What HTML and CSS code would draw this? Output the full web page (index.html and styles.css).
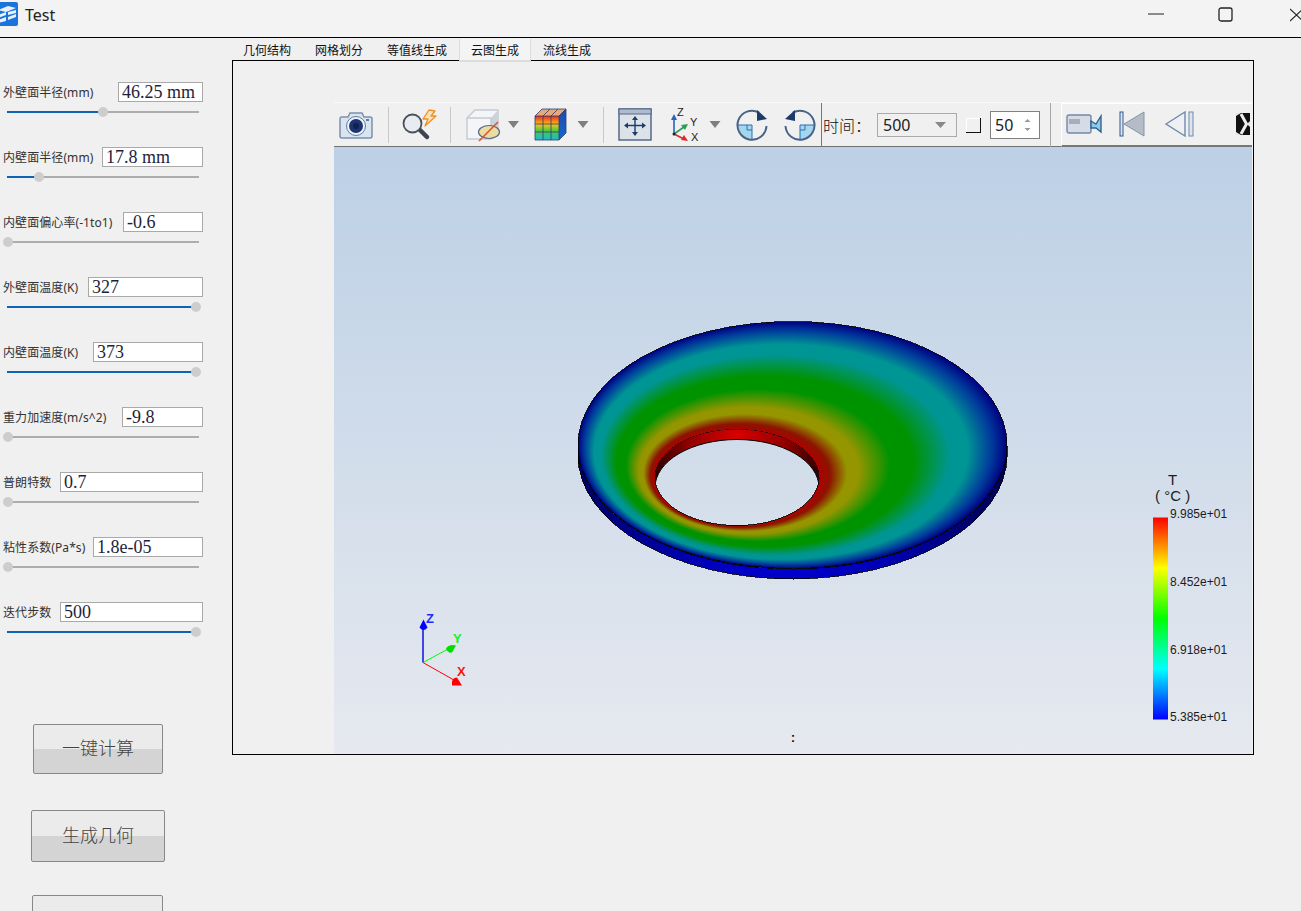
FILE: index.html
```html
<!DOCTYPE html>
<html lang="zh">
<head>
<meta charset="utf-8">
<title>Test</title>
<link rel="stylesheet" href="styles.css">
</head>
<body>
<header class="titlebar">
  <svg class="app-icon" viewBox="0 0 18 24">
    <rect x="-6" width="24" height="24" rx="2" fill="#1b74dc"/>
    <path d="M-2 8 8 4 16 6 6 10ZM-2 13 6 10 6 13-2 16ZM8 10 16 8 16 11 8 13ZM-2 18 6 15 6 19-2 21ZM8 15 16 12 16 15 8 18Z" fill="#e9f2fc"/>
  </svg>
  <span class="app-name">Test</span>
  <div class="win-controls">
    <svg class="win-min" viewBox="0 0 16 2"><path d="M0 1H16" stroke="#222"/></svg>
    <svg class="win-max" viewBox="0 0 15 15"><rect x="1" y="1" width="13" height="13" rx="2" fill="none" stroke="#222" stroke-width="1.3"/></svg>
    <svg class="win-close" viewBox="0 0 11 14"><path d="M0 1 13 13M13 1 0 13" stroke="#222" stroke-width="1.1" fill="none"/></svg>
  </div>
</header>

<div class="workspace">
  <aside class="sidebar">
    <div class="param"><div class="param-line"><label class="param-label">外壁面半径(mm)</label><input class="param-input w85" value="46.25 mm"></div><div class="slider"><div class="fill" style="width:96px"></div></div></div>
    <div class="param"><div class="param-line"><label class="param-label">内壁面半径(mm)</label><input class="param-input w101" value="17.8 mm"></div><div class="slider"><div class="fill" style="width:32px"></div></div></div>
    <div class="param"><div class="param-line"><label class="param-label">内壁面偏心率(-1to1)</label><input class="param-input w80" value="-0.6"></div><div class="slider"><div class="fill" style="width:1px"></div></div></div>
    <div class="param"><div class="param-line"><label class="param-label">外壁面温度(K)</label><input class="param-input w115" value="327"></div><div class="slider"><div class="fill" style="width:189px"></div></div></div>
    <div class="param"><div class="param-line"><label class="param-label">内壁面温度(K)</label><input class="param-input w110" value="373"></div><div class="slider"><div class="fill" style="width:189px"></div></div></div>
    <div class="param"><div class="param-line"><label class="param-label">重力加速度(m/s^2)</label><input class="param-input w81" value="-9.8"></div><div class="slider"><div class="fill" style="width:1px"></div></div></div>
    <div class="param"><div class="param-line"><label class="param-label">普朗特数</label><input class="param-input w143" value="0.7"></div><div class="slider"><div class="fill" style="width:1px"></div></div></div>
    <div class="param"><div class="param-line"><label class="param-label">粘性系数(Pa*s)</label><input class="param-input w110" value="1.8e-05"></div><div class="slider"><div class="fill" style="width:1px"></div></div></div>
    <div class="param"><div class="param-line"><label class="param-label">迭代步数</label><input class="param-input w143" value="500"></div><div class="slider"><div class="fill" style="width:189px"></div></div></div>

    <button class="action action-a">一键计算</button>
    <button class="action action-b">生成几何</button>
    <button class="action action-c"></button>
  </aside>

  <main class="content">
    <nav class="tabs">
      <span class="tab">几何结构</span>
      <span class="tab">网格划分</span>
      <span class="tab">等值线生成</span>
      <span class="tab tab-active">云图生成</span>
      <span class="tab">流线生成</span>
    </nav>
    <section class="frame">
      <div class="view">
        <div class="toolbar">
          <svg class="ic i-cam" viewBox="0 0 34 28">
            <path d="M2 6H9L11 2H23L25 6H31Q33 6 33 8V25Q33 27 31 27H3Q1 27 1 25V8Q1 6 2 6Z" fill="#d9e4f1" stroke="#7d90ab" stroke-width="1.5"/>
            <circle cx="17" cy="15" r="9.5" fill="#eef3f9" stroke="#5f7ba3"/>
            <circle cx="17" cy="15" r="7" fill="#1c3470"/>
            <circle cx="17" cy="15" r="3" fill="#0f2250"/>
            <rect x="27" y="8" width="3" height="2" fill="#5f7ba3"/>
          </svg>
          <span class="sep s-a"></span>
          <svg class="ic i-search" viewBox="0 0 35 32">
            <path d="M18 21 25 28" stroke="#3e4350" stroke-width="4.5" stroke-linecap="round"/>
            <circle cx="10.500" cy="14.500" r="9" fill="#e8ebef" stroke="#4a4f59" stroke-width="1.8"/>
            <path d="M27 1 21 10H26L23 17 34 7H29L33 2Z" fill="#fbe2bc" stroke="#ee8f20" stroke-width="1.3" stroke-linejoin="round"/>
          </svg>
          <span class="sep s-b"></span>
          <svg class="ic i-box" viewBox="0 0 36 34">
            <path d="M2 10 10 2H33V24L26 31H2Z" fill="#f4f5f7" stroke="#c3cad5" stroke-width="1.4"/>
            <path d="M26 10 33 2V24L26 31Z" fill="#ccd2db"/>
            <path d="M2 10H26V31" fill="none" stroke="#c3cad5" stroke-width="1.4"/>
            <ellipse cx="24" cy="24" rx="10.5" ry="6.5" fill="#ecdca4" stroke="#55688a" stroke-width="1.2"/>
            <path d="M14 33 33 14" stroke="#d8562c" stroke-width="1.6"/>
          </svg>
          <svg class="ic i-tri i-tri-a" viewBox="0 0 11 7"><path d="M0 0H11L5.5 7Z" fill="#7f7f7f"/></svg>
          <svg class="ic i-cube" viewBox="0 0 33 33">
            <defs>
              <linearGradient id="cubeFace" x1="0" y1="0" x2="0" y2="1">
                <stop offset="0" stop-color="#ea2c20"/><stop offset=".35" stop-color="#f6c21c"/><stop offset=".6" stop-color="#52c93c"/><stop offset="1" stop-color="#18b8d8"/>
              </linearGradient>
              <linearGradient id="cubeSide" x1="0" y1="0" x2="0" y2="1">
                <stop offset="0" stop-color="#2448a8"/><stop offset="1" stop-color="#1468d0"/>
              </linearGradient>
            </defs>
            <path d="M1 8H25V32H1Z" fill="url(#cubeFace)"/>
            <path d="M1 8 8 1H32L25 8Z" fill="#e8a878"/>
            <path d="M25 8 32 1V25L25 32Z" fill="url(#cubeSide)"/>
            <path d="M1 8H25V32H1ZM9 8V32M17 8V32M1 16H25M1 24H25M1 8 8 1H32L25 8M9 8 16 1M17 8 24 1M25 8 32 1V25L25 32" fill="none" stroke="#2c3e6a" stroke-width=".8"/>
          </svg>
          <svg class="ic i-tri i-tri-b" viewBox="0 0 11 7"><path d="M0 0H11L5.5 7Z" fill="#7f7f7f"/></svg>
          <span class="sep s-c"></span>
          <svg class="ic i-fit" viewBox="0 0 34 33">
            <rect x="1" y="1" width="32" height="31" fill="#dde1e8" stroke="#54688c" stroke-width="1.5"/>
            <rect x="1" y="1" width="32" height="5" fill="#b0bccd" stroke="#54688c"/>
            <path d="M17 9V27M8 17.500H26" stroke="#1c3e6c" stroke-width="1.4"/>
            <path d="M17 8 14 12H20ZM17 28 14 24H20ZM6 17.500 10 14.500V20.500ZM28 17.500 24 14.500V20.500Z" fill="#1c3e6c"/>
          </svg>
          <svg class="ic i-axes" viewBox="0 -3 30 36">
            <path d="M4 24V8" stroke="#2a62c0" stroke-width="1.6"/>
            <path d="M4 4 1 10H7Z" fill="#2a62c0"/>
            <path d="M4 24 14 17" stroke="#2f9a55" stroke-width="1.6"/>
            <path d="M18 14 11 15 15 20Z" fill="#2f9a55"/>
            <path d="M4 24 14 29" stroke="#e02828" stroke-width="1.6"/>
            <path d="M18 31 11 30 14 25Z" fill="#e02828"/>
            <circle cx="4" cy="24" r="1.500" fill="#222"/>
            <text class="axes-t" x="7" y="6">Z</text>
            <text class="axes-t" x="20" y="16">Y</text>
            <text class="axes-t" x="21" y="31">X</text>
          </svg>
          <svg class="ic i-tri i-tri-c" viewBox="0 0 11 7"><path d="M0 0H11L5.500 7Z" fill="#7f7f7f"/></svg>
          <svg class="ic i-rot" viewBox="0 0 32 32">
            <path d="M2 16H16V30A14 14 0 0 1 2 16Z" fill="#a5d6ef"/>
            <path d="M2 16H16V30M11 16V21H16" fill="none" stroke="#2f6fae"/>
            <path d="M30.500 17A14.500 14.500 0 1 1 23 3.500" fill="none" stroke="#4a6286" stroke-width="2"/>
            <path d="M31 10 21 1V12Z" fill="#1d3a6c"/>
          </svg>
          <svg class="ic i-rot2" viewBox="0 0 32 32">
            <path d="M30 16H16V30A14 14 0 0 0 30 16Z" fill="#a5d6ef"/>
            <path d="M30 16H16V30M21 16V21H16" fill="none" stroke="#2f6fae"/>
            <path d="M1.500 17A14.500 14.500 0 1 0 9 3.500" fill="none" stroke="#4a6286" stroke-width="2"/>
            <path d="M1 10 11 1V12Z" fill="#1d3a6c"/>
          </svg>
          <span class="sep-dark"></span>
          <span class="time-label">时间：</span>
          <div class="combo"><span>500</span><svg class="combo-arrow" viewBox="0 0 11 6"><path d="M0 0H11L5.500 6Z" fill="#888"/></svg></div>
          <span class="check"></span>
          <div class="spin"><span>50</span><svg class="spin-arrows" viewBox="0 0 7 14"><path d="M3.500 1 6.500 4H.5ZM3.500 13 .5 10H6.500Z" fill="#999"/></svg></div>
          <span class="sep s-d"></span>
          <div class="player">
            <svg class="ic i-video" viewBox="0 0 36 20">
              <rect x="1" y="1" width="24" height="18" rx="2" fill="#d6dce5" stroke="#7188a8" stroke-width="1.4"/>
              <rect x="3" y="5" width="11" height="5" fill="#a5aebb"/>
              <path d="M25 7 30 10 35 2V18L30 14 25 14Z" fill="#8fcbe8" stroke="#33618f" stroke-width="1.4"/>
            </svg>
            <svg class="ic i-first" viewBox="0 0 26 26">
              <rect x="1" y="1" width="3" height="24" fill="#dfe4ea" stroke="#2e5990"/>
              <path d="M5 13 25 1V25Z" fill="#b4bcc7" stroke="#8594a8"/>
            </svg>
            <svg class="ic i-prev" viewBox="0 0 29 26">
              <path d="M1 13 20 1V25Z" fill="#eef0f3" stroke="#6e8bac" stroke-width="1.4"/>
              <rect x="24" y="1" width="4" height="24" fill="#dfe4ea" stroke="#6e8bac"/>
            </svg>
            <svg class="ic i-more" viewBox="0 0 14 22">
              <rect width="14" height="22" fill="#111"/>
              <path d="M0 0H5L0 3ZM0 22H5L0 19ZM14 8 11 11 14 14Z" fill="#e6e6e6"/>
              <path d="M5 1 10.500 11 5 21" fill="none" stroke="#eee" stroke-width="3"/>
            </svg>
          </div>
        </div>

        <svg class="scene" viewBox="334 147 918 606">
          <defs>
            <radialGradient id="field" gradientUnits="userSpaceOnUse" gradientTransform="matrix(1 0 0 .5757 0 0)" cx="792.5" cy="772.1" r="214.5" fx="737" fy="828.6" fr="82">
              <stop offset="0" stop-color="#b00000"/>
              <stop offset=".06" stop-color="#8c1400"/>
              <stop offset=".15" stop-color="#959500"/>
              <stop offset=".21" stop-color="#959500"/>
              <stop offset=".38" stop-color="#009300"/>
              <stop offset=".5" stop-color="#009300"/>
              <stop offset=".7" stop-color="#009595"/>
              <stop offset=".79" stop-color="#009595"/>
              <stop offset=".92" stop-color="#003a9c"/>
              <stop offset="1" stop-color="#000080"/>
            </radialGradient>
            <linearGradient id="rim" gradientUnits="userSpaceOnUse" x1="578" y1="0" x2="1007" y2="0">
              <stop offset="0" stop-color="#00005c"/>
              <stop offset=".1" stop-color="#000088"/>
              <stop offset=".32" stop-color="#0000c0"/>
              <stop offset=".5" stop-color="#0000cc"/>
              <stop offset=".72" stop-color="#0000b4"/>
              <stop offset=".92" stop-color="#00006e"/>
              <stop offset="1" stop-color="#00004c"/>
            </linearGradient>
            <linearGradient id="wall" gradientUnits="userSpaceOnUse" x1="655" y1="0" x2="819" y2="0">
              <stop offset="0" stop-color="#2c0000"/>
              <stop offset=".2" stop-color="#900000"/>
              <stop offset=".5" stop-color="#d80000"/>
              <stop offset=".8" stop-color="#900000"/>
              <stop offset="1" stop-color="#2c0000"/>
            </linearGradient>
            <linearGradient id="scale" x1="0" y1="1" x2="0" y2="0">
              <stop offset="0" stop-color="#0000ff"/>
              <stop offset=".25" stop-color="#00ffff"/>
              <stop offset=".5" stop-color="#00ff00"/>
              <stop offset=".75" stop-color="#ffff00"/>
              <stop offset="1" stop-color="#ff0000"/>
            </linearGradient>
            <mask id="crescent" maskUnits="userSpaceOnUse" x="600" y="400" width="260" height="160">
              <ellipse cx="737" cy="477" rx="82" ry="48" fill="#fff"/>
              <ellipse cx="737" cy="487" rx="82" ry="48" fill="#000"/>
            </mask>
            <clipPath id="holeClip">
              <ellipse cx="737" cy="477" rx="82" ry="48"/>
            </clipPath>
          </defs>

          <g shape-rendering="crispEdges">
            <path d="M578 445A214.500 123.500 0 0 0 1007 445V455A214.500 123.500 0 0 1 578 455Z" fill="url(#rim)" stroke="#000" stroke-width=".8"/>
            <path fill-rule="evenodd" d="M578 444.500A214.500 123.500 0 0 1 1007 444.500A214.500 123.500 0 0 1 578 444.500ZM655 477A82 48 0 0 0 819 477A82 48 0 0 0 655 477Z" fill="url(#field)" stroke="#000" stroke-width=".8"/>
          </g>
          <rect x="640" y="420" width="190" height="110" fill="url(#wall)" mask="url(#crescent)"/>
          <ellipse cx="737" cy="487" rx="82" ry="48" fill="none" stroke="#000" clip-path="url(#holeClip)"/>

          <g>
            <path d="M423 662V628" stroke="#0000e0" stroke-width="1.4"/>
            <path d="M423.500 619 427.500 627Q423.500 632 419.500 627Z" fill="#0000ff"/>
            <text class="axis-l axis-z" x="426" y="622">Z</text>
            <path d="M423 662 449 648" stroke="#00ff00"/>
            <path d="M456 645Q449 643 446 648Q448 653 452 652Z" fill="#00dd00"/>
            <text class="axis-l axis-y" x="453" y="642">Y</text>
            <path d="M423 662 453 679" stroke="#ff0000"/>
            <path d="M462 685H452Q451 677 457 677Z" fill="#ff0000"/>
            <text class="axis-l axis-x" x="457" y="675">X</text>
          </g>

          <rect x="1153" y="517" width="15" height="202" fill="url(#scale)"/>
          <text class="legend-title" x="1168" y="484">T</text>
          <text class="legend-title" x="1155" y="500">( °C )</text>
          <text class="legend-val" x="1170" y="517.500">9.985e+01</text>
          <text class="legend-val" x="1170" y="585.500">8.452e+01</text>
          <text class="legend-val" x="1170" y="653.500">6.918e+01</text>
          <text class="legend-val" x="1170" y="720.500">5.385e+01</text>
          <text class="status" x="791" y="741">:</text>
        </svg>
      </div>
    </section>
  </main>
</div>
</body>
</html>
```
FILE: styles.css
```css
* { box-sizing: border-box; }

html, body {
  margin: 0;
  height: 911px;
  overflow: hidden;
}

body {
  background: #f0f0f0;
  font-family: "Noto Sans", "Noto Sans CJK SC", sans-serif;
  color: #222;
}

/* window title bar */
.titlebar {
  height: 38px;
  display: flex;
  align-items: flex-start;
  background: #f3f3f3;
  border-bottom: 1px solid #000;
}
.app-icon { width: 18px; height: 24px; margin-top: 2px; }
.app-name {
  margin: 3px 0 0 7px;
  font-size: 16px;
  line-height: 24px;
  color: #222;
}
.win-controls { margin-left: auto; display: flex; align-items: flex-start; }
.win-min { width: 16px; height: 2px; margin-top: 13px; }
.win-max { width: 15px; height: 15px; margin: 7px 0 0 54px; }
.win-close { width: 11px; height: 14px; margin: 8px 0 0 57px; }

.workspace { display: flex; align-items: flex-start; }

/* parameter column */
.sidebar { width: 232px; padding-top: 44px; flex: none; }

.param { height: 65px; padding: 0 29px 0 3px; }
.param-line {
  display: flex;
  justify-content: space-between;
  align-items: center;
  height: 20px;
}
.param-label { font-size: 12px; line-height: 20px; color: #333; white-space: nowrap; letter-spacing: .08px; margin-top: 2px; }
.param-input {
  height: 20px;
  padding: 1px 0 0 3px;
  border: 1px solid #a9a9a9;
  border-radius: 0;
  background: #fff;
  color: #1e1e3a;
  font: 18px/17px "Liberation Serif", "Noto Sans CJK SC", serif;
  outline: none;
}
.w80 { width: 80px; }
.w81 { width: 81px; }
.w85 { width: 85px; }
.w101 { width: 101px; }
.w110 { width: 110px; }
.w115 { width: 115px; }
.w143 { width: 143px; }

.slider {
  position: relative;
  width: 192px;
  height: 2px;
  margin: 9px 0 0 4px;
  background: #adadad;
}
.fill { position: relative; height: 2px; background: #0f63b4; }
.fill::after {
  content: "";
  position: absolute;
  right: -5px;
  top: -4px;
  width: 10px;
  height: 10px;
  border-radius: 50%;
  background: #cdcdcd;
}

.action {
  display: block;
  border: 1px solid #888;
  border-radius: 2px;
  background: linear-gradient(#ebebeb 0 50%, #d4d4d4 50% 100%);
  color: #444;
  font: 300 18px "Noto Sans CJK SC", sans-serif;
  padding: 0 0 4px;
}
.action-a { width: 130px; height: 50px; margin: 57px 0 0 33px; }
.action-b { width: 134px; height: 52px; margin: 36px 0 0 31px; }
.action-c { width: 131px; height: 52px; margin: 33px 0 0 32px; }

/* tabs and frame */
.content { flex: none; width: 1022px; }
.tabs { display: flex; height: 22px; padding-top: 3px; margin-left: -1px; }
.tab {
  padding: 0 12px;
  height: 19px;
  font-size: 12px;
  line-height: 19px;
  color: #111;
  white-space: nowrap;
}
.tab-active {
  position: relative;
  z-index: 1;
  height: 23px;
  margin-top: -2px;
  padding: 2px 11px 0;
  background: #f4f4f4;
  border-left: 1px solid #dcdcdc;
  border-right: 1px solid #dcdcdc;
  border-bottom: 2px solid #dcdcdc;
}

.frame {
  height: 695px;
  border: 1px solid #000;
  padding: 41px 0 0 101px;
  background: #f0f0f0;
}
.view {
  width: 918px;
  height: 652px;
  display: flex;
  flex-direction: column;
  background: linear-gradient(#b9cee5, #e6e9ef);
}

/* toolbar */
.toolbar {
  flex: none;
  height: 45px;
  display: flex;
  align-items: center;
  background: #f0f0f0;
  border-top: 1px solid #fafafa;
  border-bottom: 1px solid #707070;
}
.ic { display: block; flex: none; }
.sep { width: 1px; height: 36px; background: #c8c8c8; flex: none; }
.s-a { margin-left: 15px; }
.s-b { margin-left: 13px; }
.s-c { margin-left: 14px; }
.s-d { margin-left: 10px; height: 44px; background: #a8a8a8; }
.i-cam { width: 34px; height: 28px; margin-left: 5px; }
.i-search { width: 35px; height: 32px; margin-left: 13px; }
.i-box { width: 36px; height: 34px; margin-left: 14px; }
.i-tri { width: 11px; height: 7px; }
.i-tri-a { margin-left: 7px; }
.i-cube { width: 33px; height: 33px; margin-left: 15px; }
.i-tri-b { margin-left: 10px; width: 12px; }
.i-fit { width: 34px; height: 33px; margin-left: 14px; }
.i-axes { width: 30px; height: 36px; margin-left: 18px; }
.i-tri-c { margin-left: 9px; width: 12px; }
.i-rot { width: 32px; height: 32px; margin-left: 15px; }
.i-rot2 { width: 32px; height: 32px; margin-left: 16px; }
.axes-t { font: 11px "Liberation Sans", sans-serif; fill: #222; }
.sep-dark { width: 1px; height: 44px; margin-left: 5px; background: #777; flex: none; }
.time-label {
  flex: none;
  margin-left: 1px;
  width: 48px;
  font: 300 16px "Noto Sans CJK SC", sans-serif;
  color: #111;
  white-space: nowrap;
}
.combo {
  flex: none;
  width: 80px;
  height: 24px;
  margin-left: 6px;
  padding: 0 10px 0 5px;
  display: flex;
  align-items: center;
  justify-content: space-between;
  border: 1px solid #aaa;
  font: 16px "Noto Sans", sans-serif;
  color: #222;
}
.combo-arrow { width: 11px; height: 6px; }
.check {
  flex: none;
  width: 15px;
  height: 15px;
  margin: 2px 0 0 9px;
  border-right: 1px solid #111;
  border-bottom: 1px solid #111;
  box-shadow: inset 1px 1px 0 #fff;
}
.spin {
  flex: none;
  width: 50px;
  height: 28px;
  margin: 1px 0 0 9px;
  padding: 0 8px 0 4px;
  display: flex;
  align-items: center;
  justify-content: space-between;
  background: #fff;
  border: 1px solid #808080;
  font: 16px "Noto Sans", sans-serif;
  color: #222;
}
.spin-arrows { width: 7px; height: 14px; }
.player {
  flex: none;
  width: 191px;
  height: 44px;
  margin: 0 0 0 10px;
  display: flex;
  align-items: center;
  background: #f0f0f0;
  border-top: 1px solid #fff;
  border-left: 1px solid #fff;
  border-bottom: 2px solid #777;
}
.i-video { width: 36px; height: 20px; margin-left: 4px; }
.i-first { width: 26px; height: 26px; margin-left: 17px; }
.i-prev { width: 29px; height: 26px; margin-left: 20px; }
.i-more { width: 14px; height: 22px; margin-left: 42px; }

/* 3D scene */
.scene { display: block; flex: none; width: 918px; height: 607px; }
.axis-l { font: bold 13px "Liberation Sans", sans-serif; }
.axis-z { fill: #1c2cff; }
.axis-y { fill: #22ee22; }
.axis-x { fill: #ff1010; }
.legend-title { font: 15px "Liberation Sans", sans-serif; fill: #1c1c1c; }
.legend-val { font: 12px "Liberation Sans", sans-serif; fill: #1c1c1c; }
.status { font: bold 12px "Liberation Sans", sans-serif; fill: #000; }
```
